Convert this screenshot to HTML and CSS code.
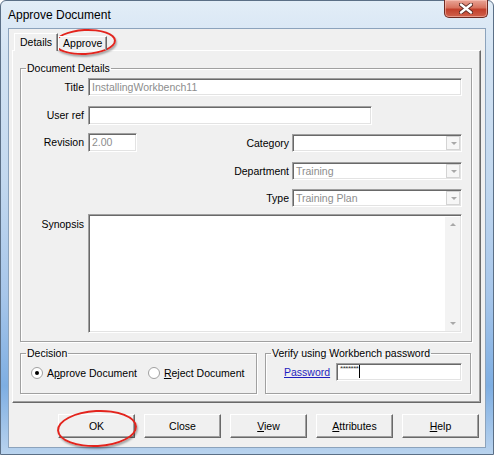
FILE: index.html
```html
<!DOCTYPE html>
<html lang="en">
<head>
    <meta charset="UTF-8">
    <title>Approve Document</title>
    <link rel="stylesheet" href="styles.css">
</head>
<body>

    <div class="window">
        <div class="titlebar">
            <span class="title">Approve Document</span>
            <div class="close-btn">
                <svg width="14" height="11" viewBox="0 0 14 11">
                    <path d="M2 1.5 L12 9.5 M12 1.5 L2 9.5" stroke="#5a2a24" stroke-width="4.2" stroke-linecap="round"/>
                    <path d="M2 1.5 L12 9.5 M12 1.5 L2 9.5" stroke="#fff" stroke-width="2.4" stroke-linecap="round"/>
                </svg>
            </div>
        </div>

        <div class="client">
            <div class="tabs">
                <div class="tab tab-active">Details</div>
                <div class="tab">Approve</div>
            </div>

            <div class="tab-page">
                <fieldset class="group group-details">
                    <legend>Document Details</legend>

                    <div class="row">
                        <span class="lbl">Title</span>
                        <div class="field ro w-full">InstallingWorkbench11</div>
                    </div>
                    <div class="row row-userref">
                        <span class="lbl">User ref</span>
                        <div class="field w-userref"></div>
                    </div>

                    <div class="row row-block">
                        <span class="lbl">Revision</span>
                        <div class="field ro w-rev">2.00</div>
                        <div class="combos">
                            <div class="combo-row">
                                <span class="lbl2">Category</span>
                                <div class="field combo"><span class="combo-text"></span><span class="drop"></span></div>
                            </div>
                            <div class="combo-row">
                                <span class="lbl2">Department</span>
                                <div class="field combo"><span class="combo-text">Training</span><span class="drop"></span></div>
                            </div>
                            <div class="combo-row">
                                <span class="lbl2">Type</span>
                                <div class="field combo"><span class="combo-text">Training Plan</span><span class="drop"></span></div>
                            </div>
                        </div>
                    </div>

                    <div class="row row-synopsis">
                        <span class="lbl">Synopsis</span>
                        <div class="field memo">
                            <div class="scroll">
                                <span class="arrow up"></span>
                                <span class="arrow down"></span>
                            </div>
                        </div>
                    </div>
                </fieldset>

                <div class="lower">
                    <fieldset class="group group-decision">
                        <legend>Decision</legend>
                        <div class="radios">
                            <span class="radio checked"></span>
                            <span class="radio-label">A<u>p</u>prove Document</span>
                            <span class="radio"></span>
                            <span class="radio-label"><u>R</u>eject Document</span>
                        </div>
                    </fieldset>
                    <fieldset class="group group-verify">
                        <legend>Verify using Workbench password</legend>
                        <div class="pw-row">
                            <a class="pw-link" href="#">Password</a>
                            <div class="field pw"><span class="stars">*******</span><span class="caret"></span></div>
                        </div>
                    </fieldset>
                </div>
            </div>

            <div class="buttons">
                <button class="btn">OK</button>
                <button class="btn">Close</button>
                <button class="btn"><u>V</u>iew</button>
                <button class="btn"><u>A</u>ttributes</button>
                <button class="btn"><u>H</u>elp</button>
            </div>
        </div>
    </div>

    <!-- red highlight rings -->
    <div class="ring ring-tab"></div>
    <div class="ring ring-ok"></div>

</body>
</html>
```

FILE: styles.css
```css
* {
    box-sizing: border-box;
}

body {
    margin: 0;
    width: 494px;
    height: 455px;
    overflow: hidden;
    background: #fff;
    font-family: "Liberation Sans", Arial, sans-serif;
    font-size: 10.5px;
    color: #000;
}

/* Ventana con marco tipo Aero */
.window {
    position: relative;
    width: 494px;
    height: 455px;
    display: flex;
    flex-direction: column;
    padding: 0 7px 6px 7px;
    border: 1px solid #5b6f86;
    border-radius: 6px 6px 0 0;
    background: linear-gradient(to bottom, #e2edf7 0%, #d3e3f3 12%, #c2d8ef 40%, #a7c6ea 65%, #7eaee2 85%, #b9d3ee 100%);
}

.titlebar {
    height: 27px;
    display: flex;
    align-items: flex-start;
    justify-content: space-between;
}

.title {
    margin-top: 7px;
    font-size: 12px;
    color: #000;
}

.close-btn {
    width: 44px;
    height: 18px;
    margin-top: -1px;
    margin-right: -2px;
    display: flex;
    align-items: center;
    justify-content: center;
    border: 1px solid #6e2a22;
    border-top: none;
    border-radius: 0 0 5px 5px;
    background: linear-gradient(to bottom, #e9a597 0%, #d8735f 45%, #c2402c 55%, #d0624c 100%);
    box-shadow: inset 0 0 0 1px rgba(255, 210, 200, 0.5);
}

/* Zona cliente */
.client {
    flex: 1;
    display: flex;
    flex-direction: column;
    padding: 0 4px 0 3px;
    background: #f0f0f0;
    border: 1px solid #8ca3bc;
}

.tabs {
    display: flex;
    height: 21px;
    padding-top: 4px;
    padding-left: 2px;
    position: relative;
    z-index: 1;
}

.tab {
    height: 14px;
    margin-top: 3px;
    padding: 0 4px;
    line-height: 13px;
    border: 1px solid #fff;
    border-bottom: none;
    border-right-color: #696969;
    box-shadow: inset -1px 0 #a0a0a0;
}

.tab-active {
    height: 18px;
    margin-top: 0;
    padding: 0 5px 0 5px;
    line-height: 17px;
    background: #f0f0f0;
}

.tab-page {
    padding: 11px 9px 8px 7px;
    border: 1px solid #fff;
    border-right-color: #696969;
    border-bottom-color: #696969;
    box-shadow: inset -1px -1px #a0a0a0;
}

/* Marcos de grupo */
.group {
    margin: 0;
    padding: 0;
    border: 1px solid #a0a0a0;
    box-shadow: inset 1px 1px #fff, 1px 1px #fff;
}

.group legend {
    padding: 0 1px;
    margin-left: 5px;
    line-height: 12px;
}

.group-details {
    padding: 4px 9px 8px 0;
}

.row {
    display: flex;
    align-items: flex-start;
}

.lbl {
    width: 63px;
    margin-right: 4px;
    text-align: right;
    line-height: 18px;
}

.row-userref {
    margin-top: 10px;
}

.row-block {
    margin-top: 8px;
}

.row-synopsis {
    margin-top: 7px;
}

.row-synopsis .lbl {
    line-height: 12px;
    padding-top: 4px;
}

/* Campos hundidos */
.field {
    height: 18px;
    background: #fff;
    border: 1px solid #fff;
    border-top-color: #a0a0a0;
    border-left-color: #a0a0a0;
    box-shadow: inset 1px 1px #696969, inset -1px -1px #e3e3e3;
    padding: 0 3px;
    line-height: 16px;
    white-space: nowrap;
    overflow: hidden;
}

.ro {
    color: #8d8d8d;
}

.w-full {
    width: 374px;
}

.w-userref {
    width: 284px;
    height: 19px;
}

.w-rev {
    width: 49px;
    height: 19px;
}

.combos {
    flex: 1;
    display: flex;
    flex-direction: column;
    gap: 10px;
    margin-top: 1px;
}

.combo-row {
    display: flex;
    justify-content: flex-end;
}

.combo-row:last-child {
    margin-top: -1px;
}

.lbl2 {
    margin-right: 3px;
    line-height: 18px;
}

.combo {
    width: 170px;
    display: flex;
    justify-content: space-between;
    padding-right: 1px;
    color: #8d8d8d;
}

.drop {
    width: 14px;
    height: 14px;
    margin-top: 1px;
    border: 1px solid #d4d4d4;
    background: #f6f6f6;
    position: relative;
}

.drop::after {
    content: "";
    position: absolute;
    left: 4px;
    top: 5px;
    border-left: 3px solid transparent;
    border-right: 3px solid transparent;
    border-top: 3px solid #a8a8a8;
}

.memo {
    width: 374px;
    height: 119px;
    display: flex;
    justify-content: flex-end;
    padding: 2px 1px 1px 2px;
}

.scroll {
    width: 15px;
    height: 100%;
    background: #f3f3f3;
    display: flex;
    flex-direction: column;
    justify-content: space-between;
    align-items: center;
    padding: 6px 0;
}

.arrow {
    width: 0;
    height: 0;
    border-left: 3px solid transparent;
    border-right: 3px solid transparent;
}

.arrow.up {
    border-bottom: 3px solid #a8a8a8;
}

.arrow.down {
    border-top: 3px solid #a8a8a8;
}

/* Parte inferior */
.lower {
    display: flex;
    gap: 8px;
    margin-top: 5px;
}

.group-decision {
    width: 237px;
    height: 47px;
    flex-shrink: 0;
}

.group-verify {
    flex: 1;
    height: 47px;
}

.radios {
    display: flex;
    align-items: center;
    white-space: nowrap;
    padding: 8px 0 0 10px;
}

.radio {
    width: 12px;
    height: 12px;
    flex-shrink: 0;
    border-radius: 50%;
    border: 1px solid #a0a0a0;
    background: #fff;
    display: flex;
    align-items: center;
    justify-content: center;
    margin-right: 4px;
}

.radio.checked::after {
    content: "";
    width: 4px;
    height: 4px;
    border-radius: 50%;
    background: #000;
}

.radio-label {
    margin-right: 11px;
}

.pw-row {
    display: flex;
    align-items: center;
    white-space: nowrap;
    padding: 4px 0 0 18px;
}

.pw-link {
    color: #1f1fbf;
    text-decoration: underline;
    margin-right: 6px;
}

.pw {
    width: 126px;
    display: flex;
    align-items: flex-start;
    padding-left: 3px;
}

.stars {
    font-size: 8px;
    line-height: 10px;
    letter-spacing: -0.5px;
    color: #333;
}

.caret {
    width: 1px;
    height: 13px;
    margin-top: 1px;
    margin-left: 1px;
    background: #000;
}

/* Botones */
.buttons {
    display: flex;
    gap: 9px;
    margin-top: 11px;
    padding-left: 46px;
}

.btn {
    width: 77px;
    height: 24px;
    padding: 0;
    font-family: inherit;
    font-size: 10.5px;
    color: #000;
    background: #f0f0f0;
    border: 1px solid #fff;
    border-right-color: #696969;
    border-bottom-color: #696969;
    box-shadow: inset -1px -1px #a0a0a0;
}

/* Círculos rojos de resaltado */
.ring {
    position: absolute;
    border: 2px solid #e3241d;
    border-radius: 50%;
    box-shadow: 1px 2px 2px rgba(0, 0, 0, 0.3);
}

.ring-tab {
    left: 54px;
    top: 29px;
    width: 62px;
    height: 26px;
    transform: rotate(-3deg);
}

.ring-ok {
    left: 57px;
    top: 410px;
    width: 80px;
    height: 37px;
    transform: rotate(-3deg);
}
```
